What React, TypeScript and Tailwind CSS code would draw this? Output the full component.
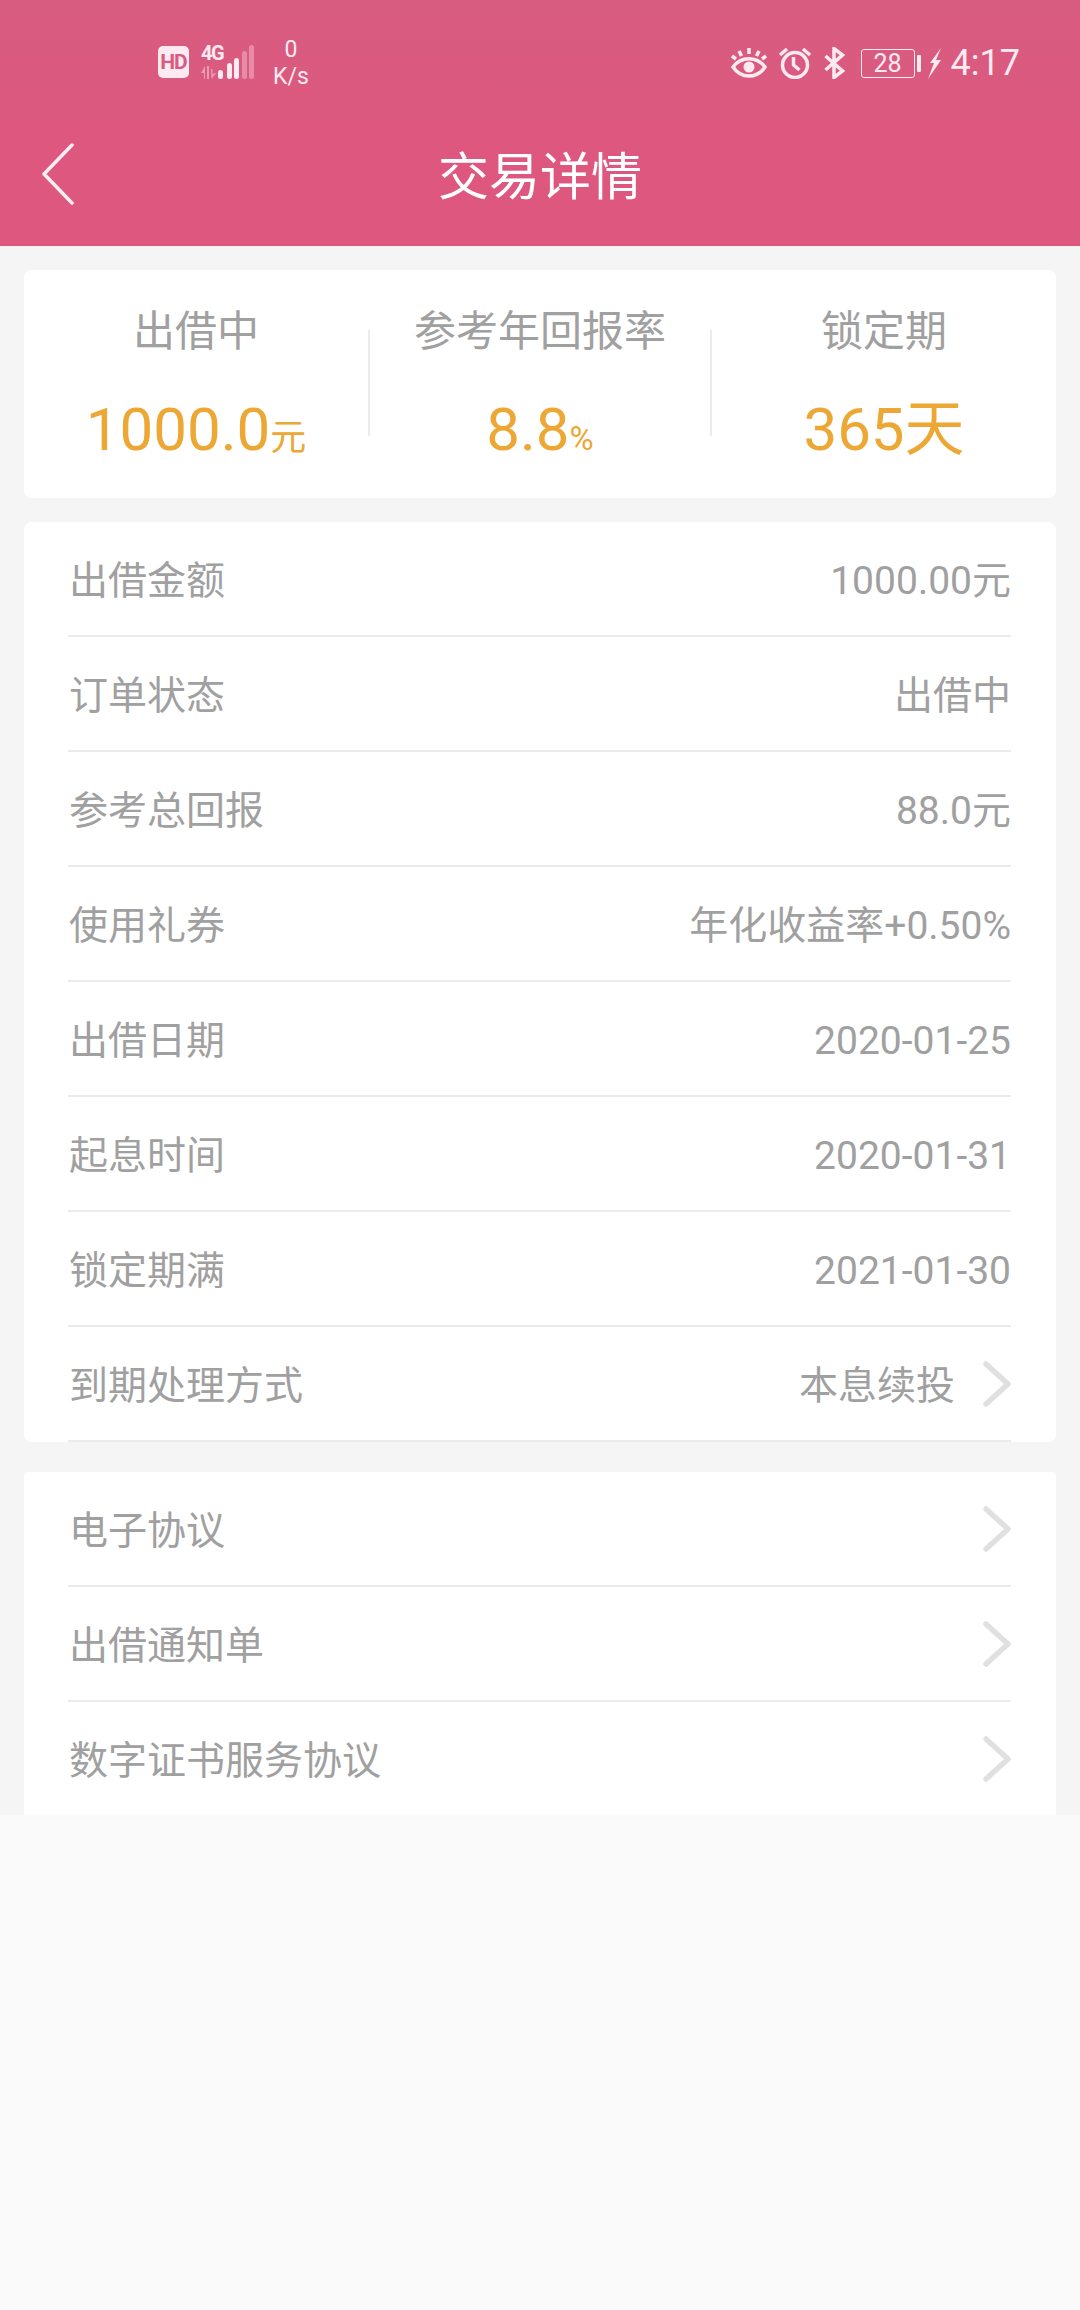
// 交易详情 — 出借订单详情页

const CJK = "font-['Roboto','Noto_Sans_CJK_SC',sans-serif]";

const DETAIL_ROWS = [
  { label: '出借金额', value: '1000.00元' },
  { label: '订单状态', value: '出借中' },
  { label: '参考总回报', value: '88.0元' },
  { label: '使用礼券', value: '年化收益率+0.50%' },
  { label: '出借日期', value: '2020-01-25' },
  { label: '起息时间', value: '2020-01-31' },
  { label: '锁定期满', value: '2021-01-30' },
  { label: '到期处理方式', value: '本息续投', link: true },
];

const LINK_ROWS = ['电子协议', '出借通知单', '数字证书服务协议'];

function Chevron() {
  return (
    <svg width="28" height="46" viewBox="0 0 28 46" fill="none" className="shrink-0">
      <path d="M3 3l22 20L3 43" stroke="#e0e0e0" strokeWidth="5.500" strokeLinecap="round" strokeLinejoin="round" />
    </svg>
  );
}

function SignalBars() {
  return (
    <svg width="36" height="34" viewBox="0 0 36 34" className="ml-[-1px]">
      <rect x="0" y="25" width="5" height="9" rx="2.500" fill="#ffeaf1" />
      <rect x="9" y="18" width="5" height="16" rx="2.500" fill="#ffeaf1" />
      <rect x="16" y="13" width="5" height="21" rx="2.500" fill="#ffeaf1" />
      <rect x="24" y="6" width="5" height="28" rx="2.500" fill="#ffeaf1" opacity="0.35" />
      <rect x="31" y="0" width="5" height="34" rx="2.500" fill="#ffeaf1" opacity="0.35" />
    </svg>
  );
}

function StatusBar() {
  return (
    <div className={`flex h-[124px] items-center justify-between bg-gradient-to-b from-[#d85c80] to-[#dc587f] pl-[158px] pr-[60px] text-[#ffeaf1] ${CJK}`}>
      <div className="flex items-center">
        <span className="flex h-[32px] w-[31px] items-center justify-center rounded-[5px] bg-[#ffeaf1] text-[21px] font-bold leading-none tracking-[-1px] text-[#d85c80]">
          HD
        </span>
        <div className="ml-[12px] flex w-[18px] flex-col">
          <span className="text-[20px] font-bold leading-[16px] tracking-[-1.500px]">4G</span>
          <svg width="16" height="13" viewBox="0 0 16 13" className="mt-[5px]" fill="#ffeaf1" opacity="0.45">
            <path d="M0 7l4-7v13H3V7zM6 0h2v13H6zM10 3h1.500v5l4-1-5 6z" />
          </svg>
        </div>
        <SignalBars />
        <div className="ml-[19px] flex w-[36px] flex-col items-center pt-[2px] text-[23px] font-normal leading-[27px]">
          <span>0</span>
          <span>K/s</span>
        </div>
      </div>
      <div className="flex items-center pt-[2px]">
        <svg width="36" height="30" viewBox="0 0 36 30" fill="none" stroke="#ffeaf1" strokeWidth="3.500">
          <path d="M2 19c8-11 24-11 32 0-8 12-24 12-32 0z" />
          <circle cx="18" cy="19" r="5.500" fill="#ffeaf1" stroke="none" />
          <path d="M18 0v6M8 3l2.500 5M28 3l-2.500 5M1 8l4 3M35 8l-4 3" />
        </svg>
        <svg width="34" height="32" viewBox="0 0 34 32" fill="none" stroke="#ffeaf1" strokeWidth="3.500" className="ml-[11px]">
          <circle cx="17" cy="18" r="12.500" />
          <path d="M15.500 10v8l6 5M2 8l7-6M32 8l-7-6" />
        </svg>
        <svg width="21" height="32" viewBox="0 0 21 32" fill="none" stroke="#ffeaf1" strokeWidth="3.500" className="ml-[12px]">
          <path d="M1.500 9l17 15-8.500 6.500V1.500l8.500 6.500L1.500 23" />
        </svg>
        <div className="ml-[16px] flex h-[29px] w-[54px] items-center justify-center rounded-[3px] border-[1.500px] border-[#ffeaf1] text-[25px] leading-none">
          28
        </div>
        <span className="ml-[2px] h-[17px] w-[4px] rounded-[1px] bg-[#ffeaf1]" />
        <svg width="13" height="31" viewBox="0 0 13 31" fill="#ffeaf1" className="ml-[7px]">
          <path d="M13 0L2 15h4L0 31l13-19H8z" />
        </svg>
        <span className="ml-[10px] text-[36px] leading-none">4:17</span>
      </div>
    </div>
  );
}

function DetailRow({ label, value, link }: { label: string; value?: string; link?: boolean }) {
  return (
    <div className="ml-[44px] mr-[45px] flex h-[115px] items-center justify-between border-b-2 border-[#ebebeb] pl-[1px] text-[39px] text-[#a0a0a0]">
      <span className="pt-[6px]">{label}</span>
      <div className="flex items-center">
        {value && <span className="pt-[6px]">{value}</span>}
        {link && <span className="ml-[28px]"><Chevron /></span>}
      </div>
    </div>
  );
}

function Stat({ title, value, unit, unitClass }: { title: string; value: string; unit: string; unitClass: string }) {
  return (
    <div className="flex flex-col items-center">
      <span className="mt-[38px] text-[42px] leading-[48px] text-[#a0a0a0]">{title}</span>
      <span className="mt-[38px] text-[60px] leading-[72px] text-[#eca735]">
        {value}
        <span className={unitClass}>{unit}</span>
      </span>
    </div>
  );
}

export default function App() {
  return (
    <div className={`flex min-h-[2310px] flex-col bg-[#fafafa] ${CJK}`}>
      <StatusBar />
      <header className="grid h-[122px] grid-cols-[1fr_auto_1fr] items-center bg-[#dd577f] pb-[16px] text-white">
        <svg width="34" height="62" viewBox="0 0 34 62" fill="none" className="ml-[41px] mt-[-6px]">
          <path d="M31 2L3 31l28 29" stroke="#ffeef3" strokeWidth="3.500" strokeLinecap="round" strokeLinejoin="round" />
        </svg>
        <h1 className="text-[51px] font-normal leading-none">交易详情</h1>
      </header>

      <main className="flex flex-col bg-[#f5f5f5] px-[24px] pt-[24px]">
        <section className="grid h-[228px] grid-cols-3 rounded-[8px] bg-white">
          <Stat title="出借中" value="1000.0" unit="元" unitClass="text-[36px]" />
          <div className="relative">
            <span className="absolute left-0 top-[60px] h-[106px] w-[2px] bg-[#ebebeb]" />
            <Stat title="参考年回报率" value="8.8" unit="%" unitClass="text-[33px]" />
            <span className="absolute right-0 top-[60px] h-[106px] w-[2px] bg-[#ebebeb]" />
          </div>
          <Stat title="锁定期" value="365" unit="天" unitClass="text-[60px]" />
        </section>

        <section className="mt-[24px] rounded-[8px] bg-white">
          {DETAIL_ROWS.map((row) => (
            <DetailRow key={row.label} {...row} />
          ))}
        </section>

        <section className="mt-[30px] rounded-t-[4px] bg-white">
          {LINK_ROWS.map((label, i) => (
            <div
              key={label}
              className={`ml-[44px] mr-[45px] flex items-center justify-between pl-[1px] text-[39px] text-[#a0a0a0] ${i < LINK_ROWS.length - 1 ? 'h-[115px] border-b-2 border-[#ebebeb]' : 'h-[113px]'}`}
            >
              <span className="pt-[6px]">{label}</span>
              <Chevron />
            </div>
          ))}
        </section>
      </main>
    </div>
  );
}
